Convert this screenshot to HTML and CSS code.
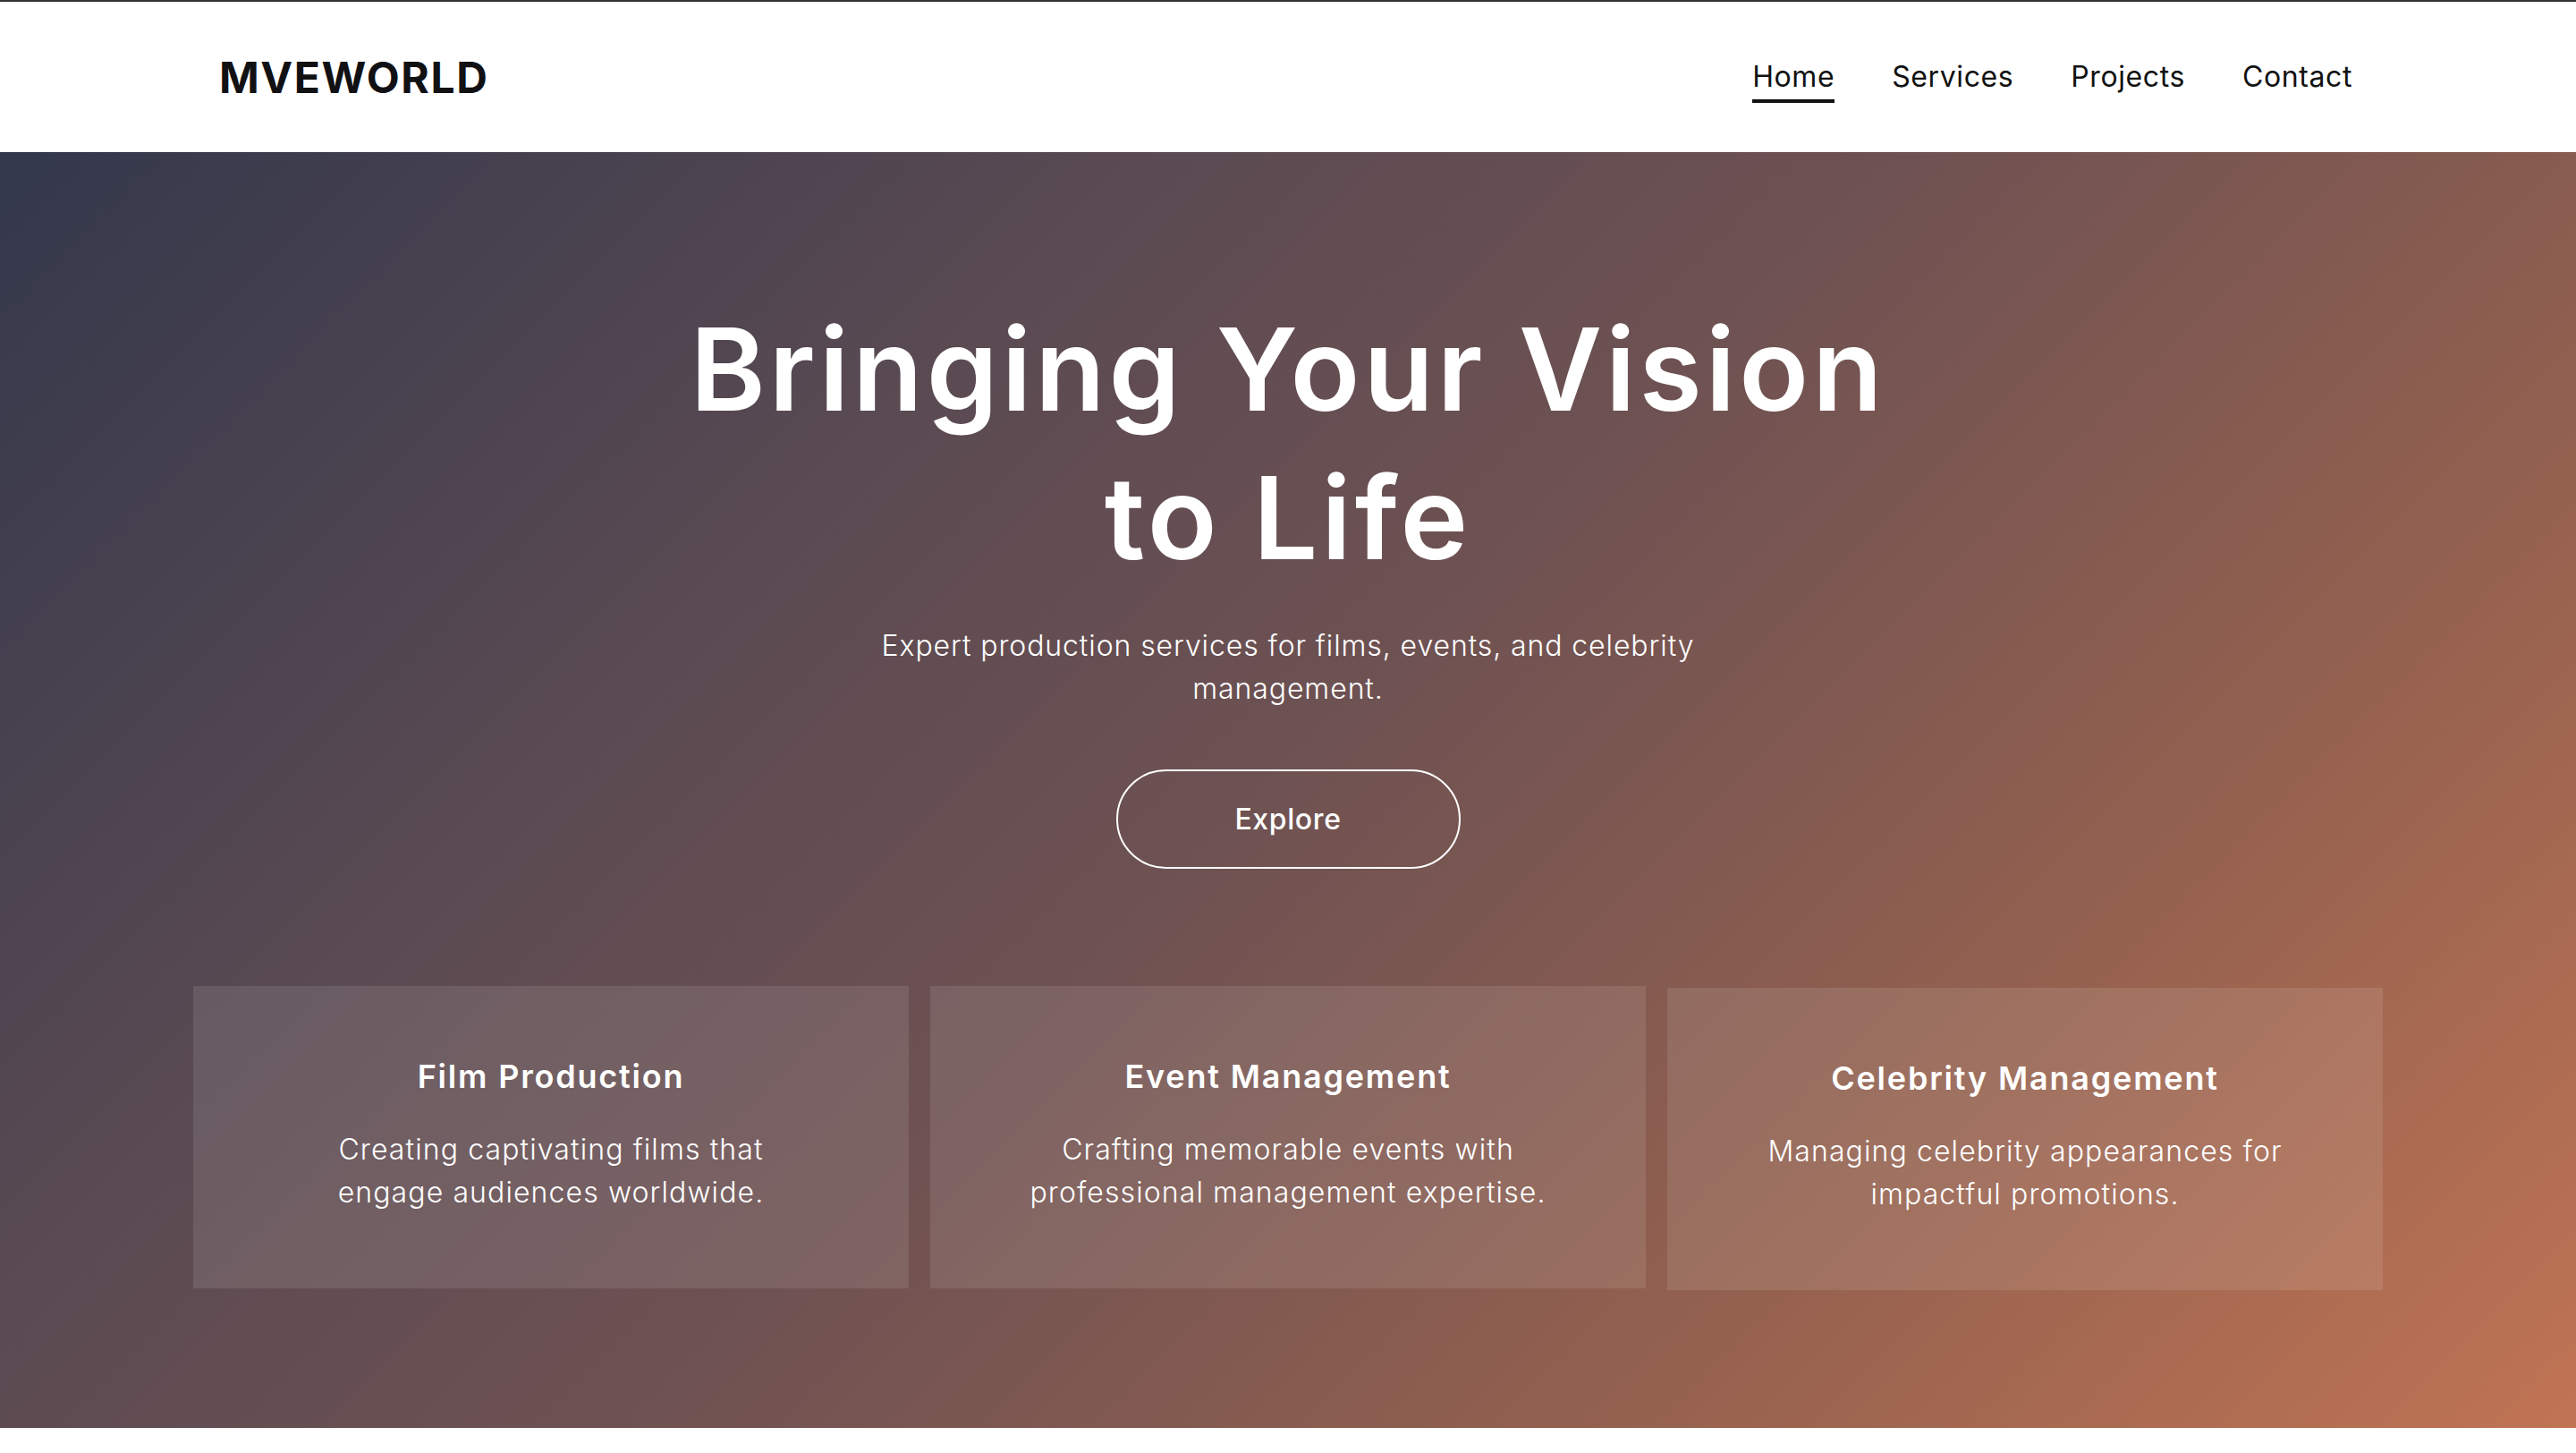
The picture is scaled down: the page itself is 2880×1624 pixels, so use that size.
FILE: index.html
```html
<!DOCTYPE html>
<html lang="en">
<head>
<meta charset="utf-8">
<title>MVEWORLD</title>
<link rel="stylesheet" href="styles.css">
</head>
<body>
<header class="site-header">
  <div class="logo">MVEWORLD</div>
  <nav class="main-nav">
    <a class="nav-link active" href="#">Home</a>
    <a class="nav-link" href="#">Services</a>
    <a class="nav-link" href="#">Projects</a>
    <a class="nav-link" href="#">Contact</a>
  </nav>
</header>
<section class="hero">
  <h1 class="hero-title">Bringing Your Vision to Life</h1>
  <p class="hero-sub">Expert production services for films, events, and celebrity management.</p>
  <a class="btn-explore" href="#">Explore</a>
  <div class="cards">
    <div class="card">
      <h3 class="card-title">Film Production</h3>
      <p class="card-text">Creating captivating films that engage audiences worldwide.</p>
    </div>
    <div class="card">
      <h3 class="card-title">Event Management</h3>
      <p class="card-text">Crafting memorable events with professional management expertise.</p>
    </div>
    <div class="card card-shift">
      <h3 class="card-title">Celebrity Management</h3>
      <p class="card-text">Managing celebrity appearances for impactful promotions.</p>
    </div>
  </div>
</section>
</body>
</html>
```
FILE: styles.css
```css
* { box-sizing: border-box; }
html, body { margin: 0; padding: 0; }
body {
  font-family: Inter, "Noto Sans", "Liberation Sans", sans-serif;
  background: #fff;
  color: #111;
  border-top: 2px solid #333;
}
.site-header {
  height: 168px;
  display: flex;
  align-items: center;
  justify-content: space-between;
  padding: 0 250px 0 245px;
  background: #fff;
}
.logo {
  font-size: 48px;
  font-weight: 700;
  letter-spacing: 1.6px;
  color: #111114;
}
.main-nav {
  display: flex;
  gap: 64px;
  align-items: center;
}
.nav-link {
  font-size: 32px;
  color: #111;
  text-decoration: none;
  padding: 10px 0 6px;
  border-bottom: 4px solid transparent;
  line-height: 1.2;
  letter-spacing: 0.6px;
}
.nav-link.active { border-bottom-color: #111; }
.hero {
  height: 1426px;
  padding: 160px 216px 0;
  text-align: center;
  color: #fff;
  background: linear-gradient(135deg, #33384c 0%, #5a4a52 30%, #6f5252 50%, #94614f 75%, #c07454 100%);
}
.hero-title {
  font-size: 128px;
  font-weight: 600;
  line-height: 1.3;
  max-width: 1420px;
  margin: 0 auto 35px;
  letter-spacing: 4px;
}
.hero-sub {
  font-size: 32px;
  font-weight: 300;
  line-height: 1.5;
  max-width: 1000px;
  margin: 0 auto 66px;
  letter-spacing: 0.9px;
}
.btn-explore {
  display: inline-flex;
  align-items: center;
  justify-content: center;
  width: 385px;
  height: 111px;
  border: 2px solid #fff;
  border-radius: 999px;
  color: #fff;
  text-decoration: none;
  font-size: 32px;
  font-weight: 500;
  letter-spacing: 0.6px;
}
.cards {
  display: grid;
  grid-template-columns: repeat(3, 1fr);
  gap: 24px;
  margin-top: 131px;
}
.card {
  height: 338px;
  padding: 80px 100px 0;
  background: rgba(255, 255, 255, 0.1);
}
.card-shift { transform: translateY(2px); }
.card-title {
  font-size: 36px;
  font-weight: 600;
  line-height: 1.2;
  margin: 0 0 36px;
  letter-spacing: 1.8px;
}
.card-text {
  font-size: 32px;
  font-weight: 300;
  line-height: 1.5;
  margin: 0;
  letter-spacing: 1.1px;
}
```
